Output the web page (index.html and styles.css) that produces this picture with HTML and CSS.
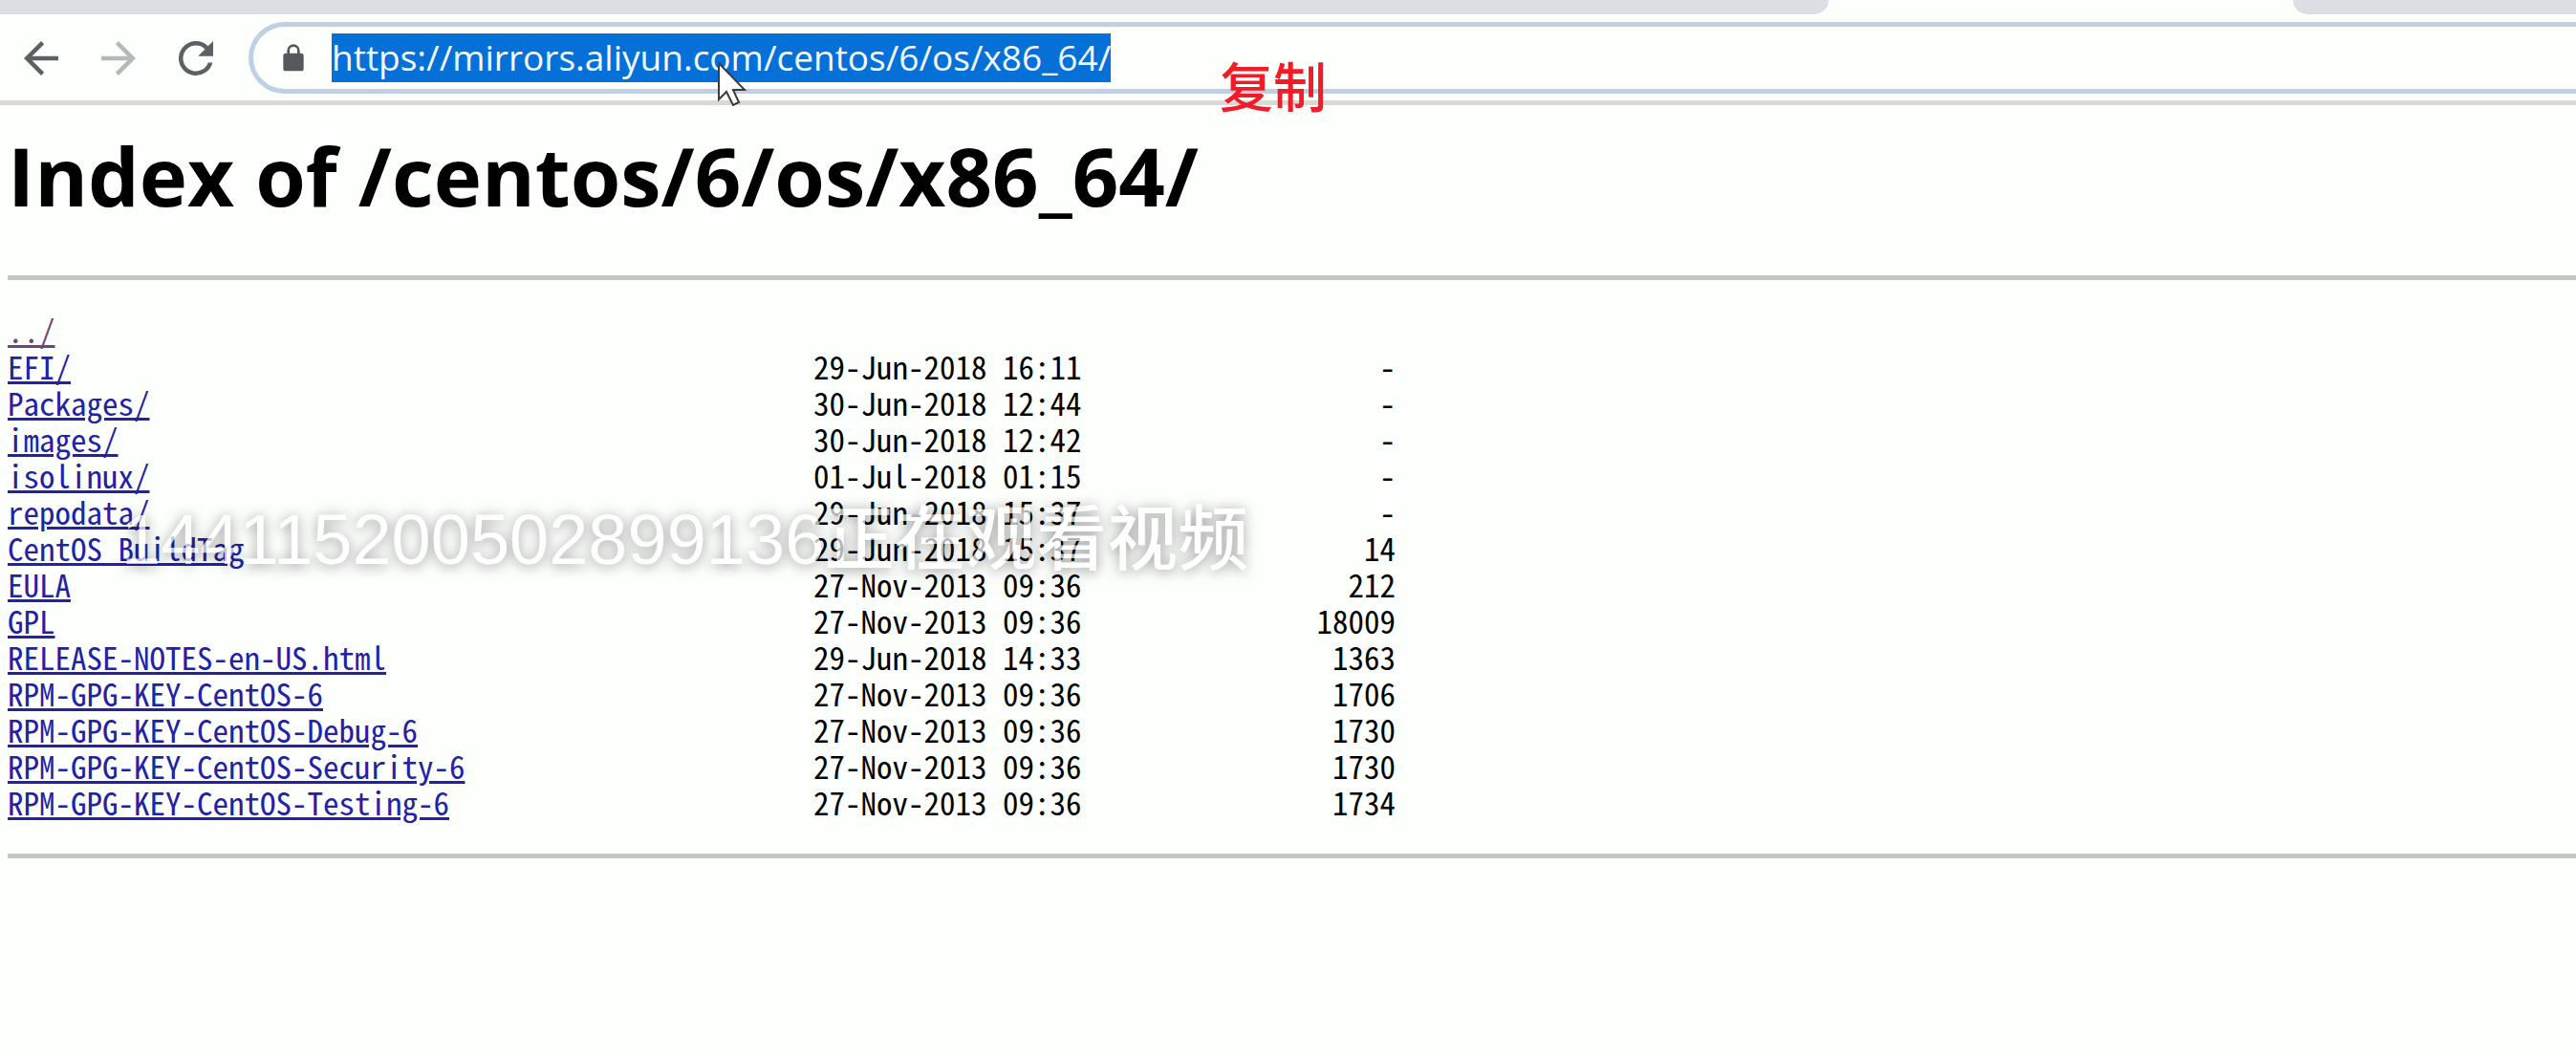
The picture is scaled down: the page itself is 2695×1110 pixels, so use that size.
FILE: index.html
```html
<!DOCTYPE html>
<html lang="en">
<head>
<meta charset="utf-8">
<title>Index of /centos/6/os/x86_64/</title>
<link rel="stylesheet" href="styles.css">
</head>
<body>
<header class="browser">
  <div class="tabs">
    <div class="tab tab-left"></div>
    <div class="tab-active"></div>
    <div class="tab tab-right"></div>
  </div>
  <nav class="toolbar" aria-label="Browser">
    <div class="nav-buttons">
      <button class="nav-button" type="button" aria-label="Back">
        <svg viewBox="0 0 24 24"><path d="M20 11H7.83l5.59-5.59L12 4l-8 8 8 8 1.41-1.41L7.83 13H20z"/></svg>
      </button>
      <button class="nav-button nav-disabled" type="button" aria-label="Forward" disabled>
        <svg viewBox="0 0 24 24"><path d="M12 4l-1.41 1.41L16.17 11H4v2h12.17l-5.58 5.59L12 20l8-8z"/></svg>
      </button>
      <button class="nav-button" type="button" aria-label="Reload">
        <svg viewBox="0 0 24 24"><path d="M17.65 6.35A7.96 7.96 0 0 0 12 4a8 8 0 1 0 7.73 10h-2.08A6 6 0 1 1 12 6c1.66 0 3.14.69 4.22 1.78L13 11h7V4z"/></svg>
      </button>
    </div>
    <div class="omnibox">
      <svg class="lock" viewBox="0 0 24 24"><path d="M18 8h-1V6A5 5 0 0 0 7 6v2H6a2 2 0 0 0-2 2v10a2 2 0 0 0 2 2h12a2 2 0 0 0 2-2V10a2 2 0 0 0-2-2zM9 6a3 3 0 0 1 6 0v2H9z"/></svg>
      <input class="url" type="text" aria-label="Address" value="https://mirrors.aliyun.com/centos/6/os/x86_64/">
    </div>
  </nav>
  <svg class="cursor" viewBox="0 0 32 48"><path d="M2 2v38l8-8 7 14 6-3-6-13h12z"/></svg>
  <span class="note" lang="zh">复制</span>
</header>
<main class="page">
  <h1>Index of /centos/6/os/x86_64/</h1>
  <hr>
  <table class="listing">
    <tbody>
      <tr><td class="name"><a class="visited" href="#up">../</a></td><td class="date"></td><td class="size"></td></tr>
      <tr><td class="name"><a href="#efi">EFI/</a></td><td class="date">29-Jun-2018 16:11</td><td class="size">-</td></tr>
      <tr><td class="name"><a href="#packages">Packages/</a></td><td class="date">30-Jun-2018 12:44</td><td class="size">-</td></tr>
      <tr><td class="name"><a href="#images">images/</a></td><td class="date">30-Jun-2018 12:42</td><td class="size">-</td></tr>
      <tr><td class="name"><a href="#isolinux">isolinux/</a></td><td class="date">01-Jul-2018 01:15</td><td class="size">-</td></tr>
      <tr><td class="name"><a href="#repodata">repodata/</a></td><td class="date">29-Jun-2018 15:37</td><td class="size">-</td></tr>
      <tr><td class="name"><a href="#buildtag">CentOS BuildTag</a></td><td class="date">29-Jun-2018 15:37</td><td class="size">14</td></tr>
      <tr><td class="name"><a href="#eula">EULA</a></td><td class="date">27-Nov-2013 09:36</td><td class="size">212</td></tr>
      <tr><td class="name"><a href="#gpl">GPL</a></td><td class="date">27-Nov-2013 09:36</td><td class="size">18009</td></tr>
      <tr><td class="name"><a href="#notes">RELEASE-NOTES-en-US.html</a></td><td class="date">29-Jun-2018 14:33</td><td class="size">1363</td></tr>
      <tr><td class="name"><a href="#key">RPM-GPG-KEY-CentOS-6</a></td><td class="date">27-Nov-2013 09:36</td><td class="size">1706</td></tr>
      <tr><td class="name"><a href="#key-debug">RPM-GPG-KEY-CentOS-Debug-6</a></td><td class="date">27-Nov-2013 09:36</td><td class="size">1730</td></tr>
      <tr><td class="name"><a href="#key-security">RPM-GPG-KEY-CentOS-Security-6</a></td><td class="date">27-Nov-2013 09:36</td><td class="size">1730</td></tr>
      <tr><td class="name"><a href="#key-testing">RPM-GPG-KEY-CentOS-Testing-6</a></td><td class="date">27-Nov-2013 09:36</td><td class="size">1734</td></tr>
    </tbody>
  </table>
  <hr>
</main>
<div class="watermark" lang="zh">144115200502899136正在观看视频</div>
</body>
</html>
```
FILE: styles.css
```css
* { box-sizing: border-box; }

body {
  margin: 0;
  position: relative;
  background: #fdfffd;
  color: #000;
  font-family: "Open Sans", "Noto Sans", sans-serif;
}

.browser { position: relative; }

.tabs {
  display: flex;
  height: 15px;
}
.tab { background: #dcdee3; }
.tab-left {
  width: 71%;
  border-bottom-right-radius: 15px;
}
.tab-active { width: 18%; }
.tab-right {
  flex: 1;
  border-bottom-left-radius: 15px;
}

.toolbar {
  display: flex;
  align-items: center;
  padding: 8px 0 7px 16px;
  border-bottom: 5px solid #dad9d6;
}
.nav-buttons {
  display: flex;
  gap: 27px;
  margin-right: 28px;
}
.nav-button {
  width: 54px;
  height: 54px;
  padding: 0;
  border: 0;
  background: none;
}
.nav-button svg {
  display: block;
  width: 54px;
  height: 54px;
  fill: #5d6063;
}
.nav-disabled svg { fill: #b6b8b9; }

.omnibox {
  flex: 1;
  display: flex;
  align-items: center;
  height: 75px;
  padding-left: 26px;
  border: 5px solid #bdd0e6;
  border-right: 0;
  border-radius: 38px 0 0 38px;
}
.lock {
  width: 32px;
  height: 32px;
  margin-right: 24px;
  fill: #55595c;
}
.url {
  field-sizing: content;
  height: 51px;
  padding: 0 0 2px;
  border: 0;
  outline: 0;
  background: #0470d8;
  color: #f4fbff;
  font: 37px "Open Sans", "Noto Sans", sans-serif;
}

.cursor {
  position: absolute;
  left: 750px;
  top: 64px;
  width: 32px;
  height: 48px;
  fill: #fff;
  stroke: #3a3c40;
  stroke-width: 2;
}
.note {
  position: absolute;
  left: 1276px;
  top: 60px;
  color: #f21c28;
  font: 500 56px/56px "Noto Sans CJK SC", sans-serif;
}

.page { padding-left: 8px; }
h1 {
  margin: 22px 0 54px;
  font-size: 85px;
  line-height: 102px;
}
hr {
  height: 5px;
  margin: 0;
  border: 0;
  background: #c4c6c3;
}

.listing {
  margin: 33px 0 35px;
  border-collapse: collapse;
  font: 33px/38px "Noto Sans Mono CJK SC", "Liberation Mono", monospace;
}
.listing td {
  height: 38px;
  padding: 0;
  white-space: nowrap;
}
.listing .name { width: 843px; }
.listing .date { width: 281px; }
.listing .size {
  width: 328px;
  text-align: right;
}
.listing a {
  color: #2222a4;
  text-decoration-thickness: 3px;
}
.listing .visited { color: #6a4878; }

.watermark {
  position: absolute;
  left: 127px;
  top: 520px;
  color: #fff;
  font: 500 74px/90px "Liberation Sans", "Noto Sans CJK SC", sans-serif;
  white-space: nowrap;
  text-shadow: 0 2px 14px rgba(0, 0, 0, 0.6);
  opacity: 0.7;
  pointer-events: none;
}
```
